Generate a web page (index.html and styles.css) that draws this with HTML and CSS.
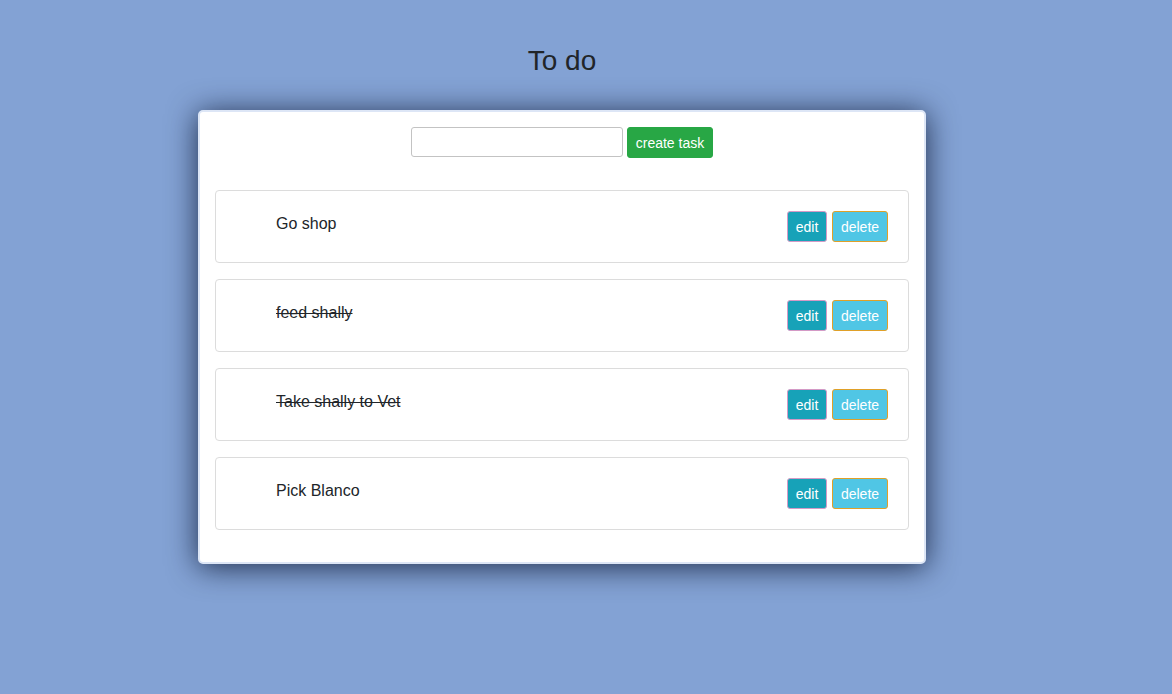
FILE: index.html
```html
<!DOCTYPE html>
<html>
<head>
<meta charset="utf-8">
<link rel="stylesheet" href="styles.css">
</head>
<body>
<div class="page">
  <h1 class="title">To do</h1>
  <div class="card">
    <form class="new-task">
      <input class="task-input" type="text">
      <button class="btn btn-create" type="button">create task</button>
    </form>
    <ul class="tasks">
      <li class="task">
        <span class="task-text">Go shop</span>
        <div class="actions"><button class="btn btn-edit">edit</button><button class="btn btn-delete">delete</button></div>
      </li>
      <li class="task">
        <span class="task-text done">feed shally</span>
        <div class="actions"><button class="btn btn-edit">edit</button><button class="btn btn-delete">delete</button></div>
      </li>
      <li class="task">
        <span class="task-text done">Take shally to Vet</span>
        <div class="actions"><button class="btn btn-edit">edit</button><button class="btn btn-delete">delete</button></div>
      </li>
      <li class="task">
        <span class="task-text">Pick Blanco</span>
        <div class="actions"><button class="btn btn-edit">edit</button><button class="btn btn-delete">delete</button></div>
      </li>
    </ul>
  </div>
</div>
</body>
</html>
```
FILE: styles.css
```css
html, body {
  margin: 0;
  padding: 0;
  background: #83a2d4;
  font-family: "Liberation Sans", Arial, sans-serif;
  color: #212529;
}
body {
  min-height: 100vh;
}
.page {
  width: 728px;
  margin-left: 198px;
  padding-top: 42px;
  padding-bottom: 60px;
}
.title {
  margin: 0 0 30px;
  text-align: center;
  font-size: 28px;
  font-weight: 400;
  line-height: 38px;
  color: #212529;
}
.card {
  background: #fff;
  border: 2px solid #dde6f6;
  border-radius: 5px;
  box-shadow: 0 3px 30px rgba(5, 15, 40, 0.8);
  padding: 15px 15px 32px;
}
.new-task {
  display: flex;
  justify-content: center;
  gap: 4px;
  margin: 0 0 32px;
}
.task-input {
  box-sizing: border-box;
  width: 212px;
  height: 30px;
  margin: 0;
  border: 1px solid #c3c3c3;
  border-radius: 3px;
  padding: 2px 6px;
  font: inherit;
}
.btn {
  box-sizing: border-box;
  height: 31px;
  margin: 0;
  padding: 0 8px;
  font-family: "Liberation Sans", Arial, sans-serif;
  font-size: 14px;
  color: #fff;
  border-radius: 3px;
  white-space: nowrap;
  cursor: pointer;
}
.btn-create {
  padding: 0 8px;
  background: #28a745;
  border: 1px solid #28a745;
}
.tasks {
  list-style: none;
  margin: 0;
  padding: 0;
  display: flex;
  flex-direction: column;
  gap: 16px;
}
.task {
  display: flex;
  justify-content: space-between;
  align-items: flex-start;
  border: 1px solid #dcdcdc;
  border-radius: 4px;
  padding: 20px 20px 20px 60px;
}
.task-text {
  font-size: 16px;
  line-height: 24px;
  padding-top: 1px;
}
.task-text.done {
  text-decoration: line-through;
}
.actions {
  display: flex;
  gap: 5px;
}
.btn-edit {
  width: 40px;
  padding: 0;
  background: #17a2b8;
  border: 1px solid #d49ac6;
}
.btn-delete {
  width: 56px;
  padding: 0;
  background: #50c6e5;
  border: 1px solid #e0a028;
}
```
